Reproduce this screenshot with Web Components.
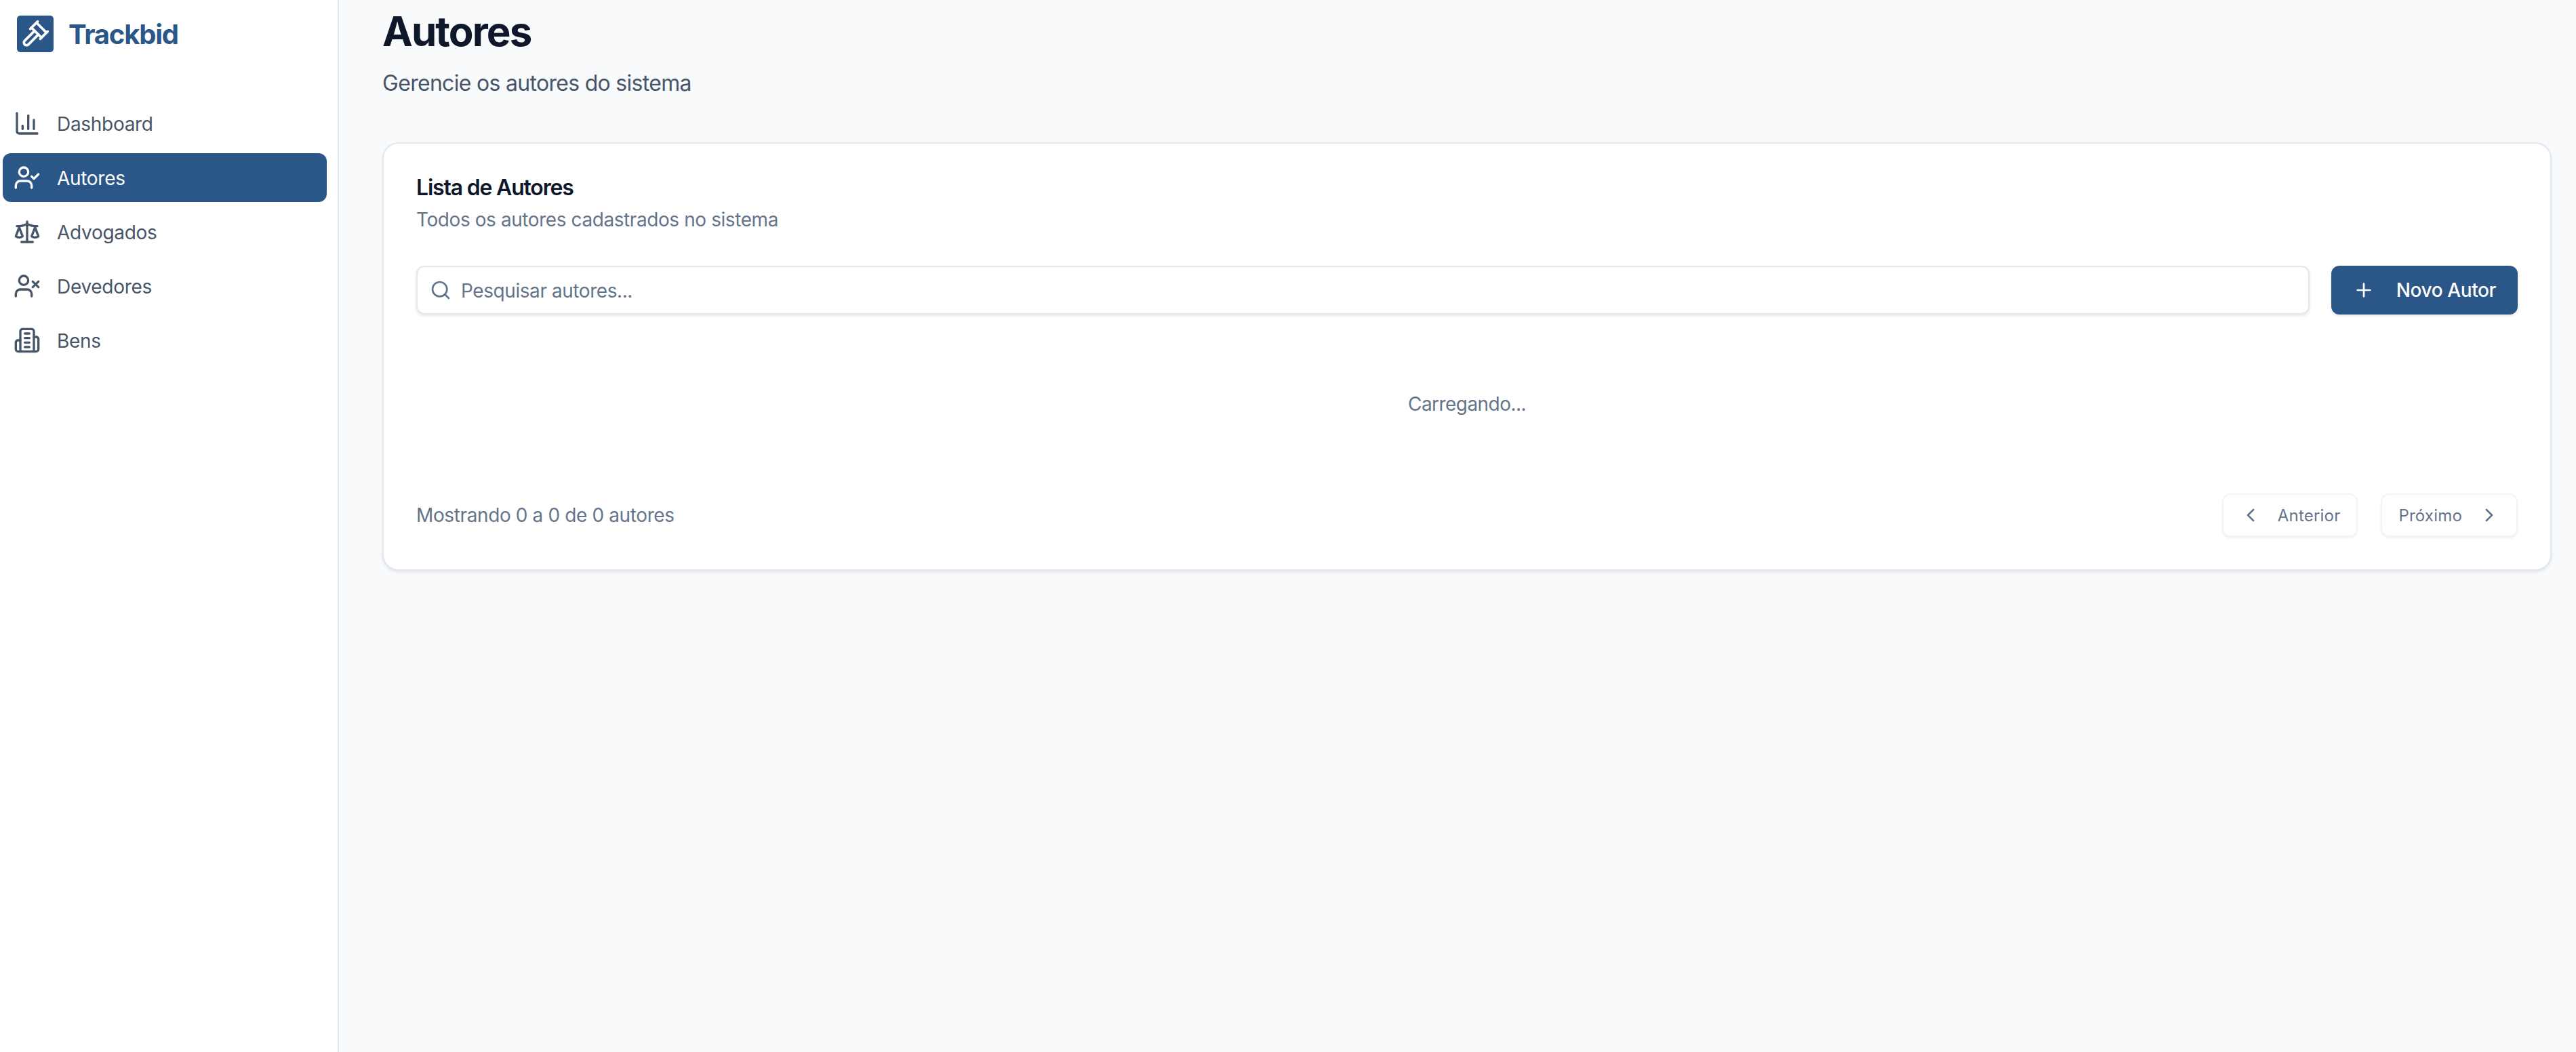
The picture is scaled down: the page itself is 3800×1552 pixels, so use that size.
<!DOCTYPE html>
<html lang="pt">
<head>
<meta charset="utf-8">
<title>Trackbid</title>
<style>
  html, body { margin: 0; height: 100%; }
  body {
    font-family: Inter, "Noto Sans", sans-serif;
    background: #f8fafc;
  }
</style>
</head>
<body>
<app-shell>
  <side-bar slot="side">
    <nav-item icon="chart">Dashboard</nav-item>
    <nav-item icon="user-check" active>Autores</nav-item>
    <nav-item icon="scale">Advogados</nav-item>
    <nav-item icon="user-x">Devedores</nav-item>
    <nav-item icon="building">Bens</nav-item>
  </side-bar>
  <page-head heading="Autores" sub="Gerencie os autores do sistema"></page-head>
  <list-card heading="Lista de Autores" sub="Todos os autores cadastrados no sistema"></list-card>
</app-shell>

<script>
/**
 * Lucide style icon bodies, on a 24x24 grid.
 */
const ICONS = {
  gavel: '<path d="m14.5 12.5-8 8a2.119 2.119 0 1 1-3-3l8-8"/><path d="m16 16 6-6"/><path d="m8 8 6-6"/><path d="m9 7 8 8"/><path d="m21 11-8-8"/>',
  chart: '<path d="M3 3v16a2 2 0 0 0 2 2h16"/><path d="M18 17V9"/><path d="M13 17V5"/><path d="M8 17v-3"/>',
  'user-check': '<path d="M16 21v-2a4 4 0 0 0-4-4H6a4 4 0 0 0-4 4v2"/><circle cx="9" cy="7" r="4"/><polyline points="16 11 18 13 22 9"/>',
  'user-x': '<path d="M16 21v-2a4 4 0 0 0-4-4H6a4 4 0 0 0-4 4v2"/><circle cx="9" cy="7" r="4"/><line x1="17" x2="22" y1="8" y2="13"/><line x1="22" x2="17" y1="8" y2="13"/>',
  scale: '<path d="m16 16 3-8 3 8c-.87.65-1.92 1-3 1s-2.13-.35-3-1Z"/><path d="m2 16 3-8 3 8c-.87.65-1.92 1-3 1s-2.13-.35-3-1Z"/><path d="M7 21h10"/><path d="M12 3v18"/><path d="M3 7h2c2 0 5-1 7-2 2 1 5 2 7 2h2"/>',
  building: '<path d="M6 22V4a2 2 0 0 1 2-2h8a2 2 0 0 1 2 2v18Z"/><path d="M6 12H4a2 2 0 0 0-2 2v6a2 2 0 0 0 2 2h2"/><path d="M18 9h2a2 2 0 0 1 2 2v9a2 2 0 0 1-2 2h-2"/><path d="M10 6h4"/><path d="M10 10h4"/><path d="M10 14h4"/><path d="M10 18h4"/>',
  search: '<circle cx="11" cy="11" r="8"/><path d="m21 21-4.3-4.3"/>',
  plus: '<path d="M5 12h14"/><path d="M12 5v14"/>',
  left: '<path d="m15 18-6-6 6-6"/>',
  right: '<path d="m9 18 6-6-6-6"/>'
}

/**
 * Builds the svg markup of an icon.
 *
 * @param {string} name - The key in ICONS.
 * @param {number} size - Width and height in pixels.
 * @returns {string} The svg markup.
 */
const icon = (name, size) => `<svg width="${size}" height="${size}" viewBox="0 0 24 24" fill="none" stroke="currentColor" stroke-width="2" stroke-linecap="round" stroke-linejoin="round" aria-hidden="true">${ICONS[name]}</svg>`

/**
 * Base class: renders html into an open shadow root.
 */
class ShadowElement extends HTMLElement {
  /**
   * Attaches the shadow root and renders.
   */
  connectedCallback () {
    if (!this.shadowRoot) {
      this.attachShadow({ mode: 'open' }).innerHTML = this.render()
    }
  }
}

customElements.define('app-shell', class extends ShadowElement {
  /**
   * @returns {string} The markup.
   */
  render () {
    return `
      <style>
        :host { display: flex; height: 100vh; overflow: hidden; }
        main { flex: 1; min-width: 0; padding: 0 36px 0 64px; }
      </style>
      <slot name="side"></slot>
      <main><slot></slot></main>
    `
  }
})

customElements.define('side-bar', class extends ShadowElement {
  /**
   * @returns {string} The markup.
   */
  render () {
    return `
      <style>
        :host {
          display: block;
          box-sizing: border-box;
          width: 500px;
          flex: none;
          background: #fff;
          border-right: 2px solid #e2e8f0;
        }
        .brand {
          display: flex;
          align-items: center;
          gap: 22px;
          height: 54px;
          padding: 23px 0 0 25px;
          color: #2a5788;
          font-size: 40px;
          font-weight: 700;
          letter-spacing: -1.2px;
        }
        .logo {
          display: flex;
          align-items: center;
          justify-content: center;
          width: 54px;
          height: 54px;
          border-radius: 5px;
          background: #2a5788;
          color: #fff;
        }
        nav {
          display: flex;
          flex-direction: column;
          gap: 8px;
          padding: 69px 16px 0 4px;
        }
      </style>
      <div class="brand"><span class="logo">${icon('gavel', 44)}</span><span>Trackbid</span></div>
      <nav><slot></slot></nav>
    `
  }
})

customElements.define('nav-item', class extends ShadowElement {
  /**
   * @returns {string} The markup.
   */
  render () {
    return `
      <style>
        :host {
          display: flex;
          align-items: center;
          gap: 24px;
          height: 72px;
          padding-left: 16px;
          border-radius: 12px;
          color: #475569;
          font-size: 28px;
          letter-spacing: -.3px;
        }
        :host([active]) { background: #2a5788; color: #fff; }
        svg { flex: none; }
        span { padding-top: 2px; }
      </style>
      ${icon(this.getAttribute('icon'), 40)}<span><slot></slot></span>
    `
  }
})

customElements.define('page-head', class extends ShadowElement {
  /**
   * @returns {string} The markup.
   */
  render () {
    return `
      <style>
        :host { display: block; padding: 10px 0 64px; }
        h1 { margin: 0; color: #0f172a; font-size: 60px; font-weight: 700; line-height: 72px; letter-spacing: -1.9px; }
        p { margin: 17px 0 0; color: #475569; font-size: 32px; line-height: 47px; letter-spacing: -.7px; }
      </style>
      <h1>${this.getAttribute('heading')}</h1>
      <p>${this.getAttribute('sub')}</p>
    `
  }
})

customElements.define('search-box', class extends ShadowElement {
  /**
   * @returns {string} The markup.
   */
  render () {
    return `
      <style>
        :host {
          display: flex;
          flex: 1;
          align-items: center;
          gap: 14px;
          box-sizing: border-box;
          height: 72px;
          padding-left: 18px;
          border: 2px solid #e2e8f0;
          border-radius: 12px;
          background: #fff;
          box-shadow: 0 2px 4px rgba(15, 23, 42, .1);
          color: #64748b;
        }
        input {
          flex: 1;
          border: 0;
          outline: 0;
          padding: 2px 0 0;
          background: transparent;
          font: 28px Inter, "Noto Sans", sans-serif;
          letter-spacing: -.43px;
          color: #64748b;
        }
        input::placeholder { color: #64748b; opacity: 1; }
        svg { flex: none; }
      </style>
      ${icon('search', 32)}<input placeholder="Pesquisar autores..." value="">
    `
  }
})

customElements.define('action-button', class extends ShadowElement {
  /**
   * @returns {string} The markup.
   */
  render () {
    return `
      <style>
        :host {
          display: inline-flex;
          align-items: center;
          gap: 32px;
          height: 72px;
          padding: 0 32px;
          border-radius: 12px;
          background: #2a5788;
          box-shadow: 0 2px 4px rgba(15, 23, 42, .1);
          color: #fff;
          font-size: 28px;
          font-weight: 500;
          letter-spacing: -.4px;
        }
      </style>
      ${icon('plus', 32)}<slot></slot>
    `
  }
})

customElements.define('page-button', class extends ShadowElement {
  /**
   * @returns {string} The markup.
   */
  render () {
    const dir = this.getAttribute('dir-icon')
    const svg = icon(dir, 32)
    return `
      <style>
        :host {
          display: inline-flex;
          align-items: center;
          gap: 24px;
          box-sizing: border-box;
          height: 64px;
          padding: 0 24px;
          border: 2px solid #f1f5f9;
          border-radius: 12px;
          background: #fff;
          box-shadow: 0 2px 3px rgba(15, 23, 42, .05);
          color: #64748b;
          font-size: 24px;
          letter-spacing: .2px;
        }
      </style>
      ${dir === 'left' ? svg : ''}<slot></slot>${dir === 'right' ? svg : ''}
    `
  }
})

customElements.define('list-card', class extends ShadowElement {
  /**
   * @returns {string} The markup.
   */
  render () {
    return `
      <style>
        :host {
          display: block;
          box-sizing: border-box;
          padding: 45px 48px 48px;
          border: 2px solid #e2e8f0;
          border-radius: 24px;
          background: #fff;
          box-shadow: 0 2px 4px rgba(15, 23, 42, .1);
        }
        h2 { margin: 0; color: #0f172a; font-size: 32px; font-weight: 600; line-height: 40px; letter-spacing: -1.2px; }
        .sub { margin: 7px 0 0; color: #64748b; font-size: 28px; line-height: 40px; letter-spacing: -.42px; }
        .tools { display: flex; gap: 32px; margin-top: 48px; }
        .loading { padding: 112px 0; color: #64748b; font-size: 28px; line-height: 40px; text-align: center; letter-spacing: -.55px; }
        .foot { display: flex; align-items: center; justify-content: space-between; }
        .count { color: #64748b; font-size: 28px; letter-spacing: -.38px; }
        .pager { display: flex; gap: 34px; }
      </style>
      <h2>${this.getAttribute('heading')}</h2>
      <p class="sub">${this.getAttribute('sub')}</p>
      <div class="tools">
        <search-box></search-box>
        <action-button>Novo Autor</action-button>
      </div>
      <div class="loading">Carregando...</div>
      <div class="foot">
        <span class="count">Mostrando 0 a 0 de 0 autores</span>
        <div class="pager">
          <page-button dir-icon="left">Anterior</page-button>
          <page-button dir-icon="right">Próximo</page-button>
        </div>
      </div>
    `
  }
})
</script>
</body>
</html>
